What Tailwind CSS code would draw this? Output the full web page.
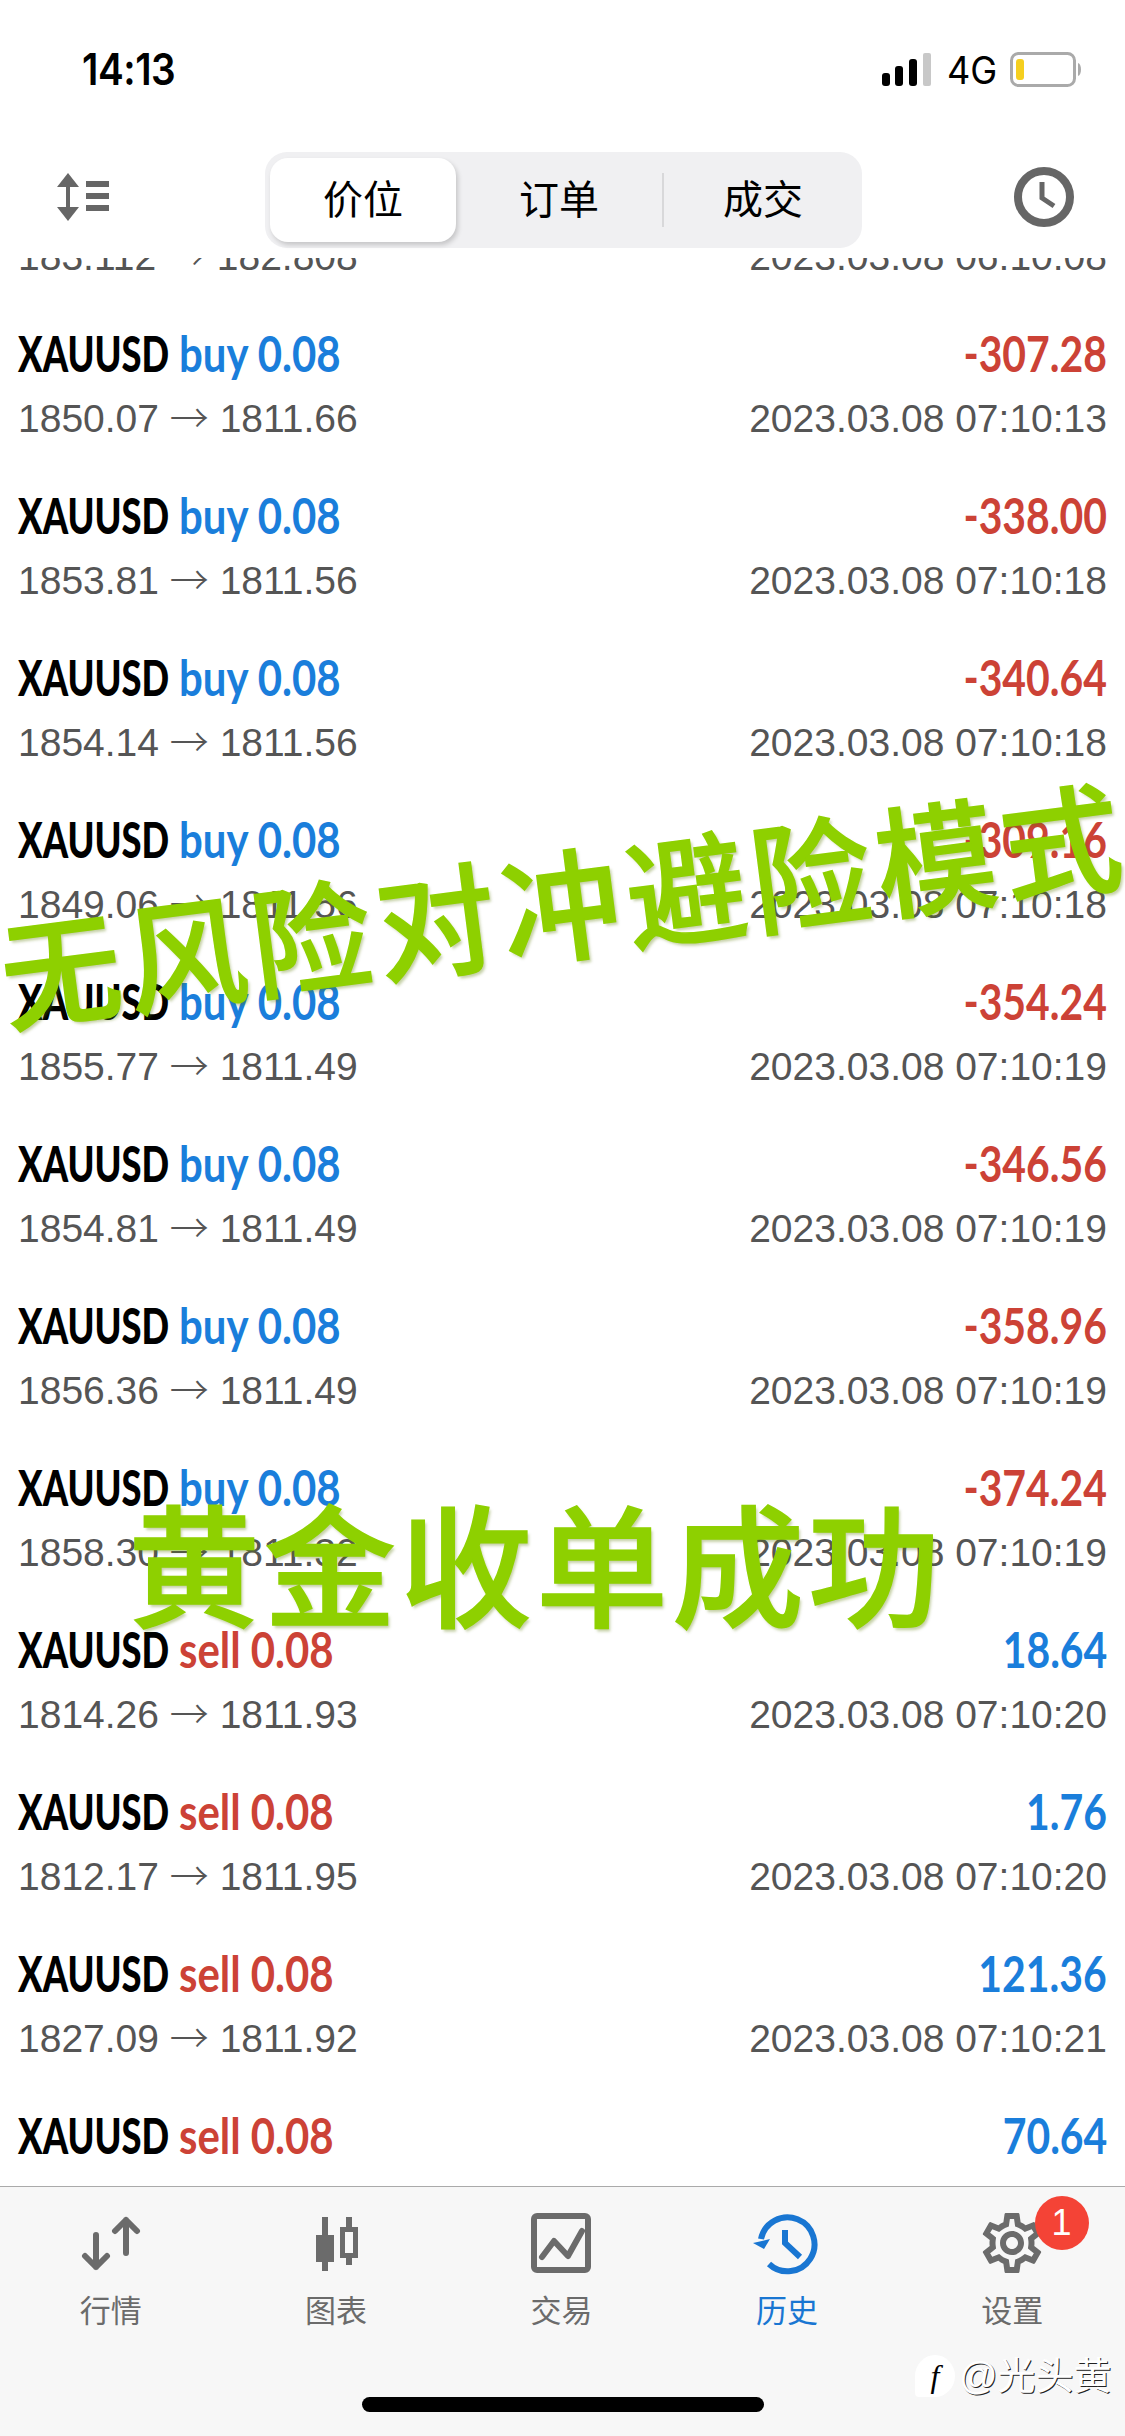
<!DOCTYPE html>
<html lang="zh">

<head>
    <meta charset="utf-8">
    <title>History</title>
    <script src="https://cdn.jsdelivr.net/npm/@tailwindcss/browser@4"></script>
</head>

<body class="bg-white font-['Liberation_Sans','Noto_Sans_CJK_SC',sans-serif]">
    <div class="relative w-[1125px] h-[2436px] overflow-hidden flex flex-col bg-white">

        <!-- Status bar -->
        <div class="h-[138px] shrink-0 flex justify-between pl-[82px] pr-[41px] pt-[45px] z-10 bg-white">
            <div class="text-[44px] leading-[48px] font-semibold text-black tracking-[-0.5px] font-['Inter',sans-serif] scale-x-[.88] origin-left">14:13</div>
            <div class="flex items-start gap-[15px] pt-[7px]">
                <svg class="w-[50px] h-[33px] mt-[1px]" viewBox="0 0 50 33">
                    <rect x="0" y="20" width="8" height="13" rx="3" fill="#000" />
                    <rect x="13" y="13" width="8" height="20" rx="3" fill="#000" />
                    <rect x="27" y="6" width="8" height="27" rx="3" fill="#000" />
                    <rect x="41" y="0" width="8" height="33" rx="2" fill="#c8c8c8" />
                </svg>
                <div class="text-[38px] leading-[36px] text-black font-['Inter',sans-serif] w-[48px] scale-x-[.95] origin-left">4G</div>
                <svg class="w-[74px] h-[35px]" viewBox="0 0 74 35">
                    <rect x="1.5" y="1.5" width="63" height="32" rx="7" fill="#fff" stroke="#aaa" stroke-width="3" />
                    <rect x="6" y="7" width="8" height="21" rx="3" fill="#f5cf1f" />
                    <path d="M68 11 C72 12 72 23 68 24 Z" fill="#aaa" />
                </svg>
            </div>
        </div>

        <!-- Header -->
        <div class="h-[120px] shrink-0 flex items-start relative z-10 bg-white">
            <svg class="absolute left-[55px] top-[34px] w-[56px] h-[50px]" viewBox="0 0 56 50" fill="#666">
                <rect x="11" y="6" width="4" height="38" />
                <path d="M13 1 L24 15 H2 Z" />
                <path d="M13 49 L24 35 H2 Z" />
                <rect x="31" y="9" width="23" height="6" />
                <rect x="31" y="21" width="23" height="6" />
                <rect x="31" y="33" width="23" height="6" />
            </svg>

            <div class="absolute left-[265px] top-[14px] w-[597px] h-[96px] rounded-[22px] bg-[#f0f0f2] flex items-center text-[40px] text-black">
                <div class="ml-[5px] w-[186px] h-[84px] rounded-[18px] bg-white shadow-[2px_3px_5px_rgba(0,0,0,0.18)] flex items-center justify-center">价位</div>
                <div class="w-[206px] text-center">订单</div>
                <div class="w-[2px] h-[54px] bg-[#d8d8da]"></div>
                <div class="flex-1 text-center">成交</div>
            </div>

            <svg class="absolute left-[1012px] top-[27px] w-[64px] h-[64px]" viewBox="0 0 64 64" fill="none" stroke="#666">
                <circle cx="32" cy="32" r="26" stroke-width="8" />
                <path d="M30 17 V33 L42 41" stroke-width="5" />
            </svg>
        </div>

        <!-- Deals list, scrolled so the first row is cut off -->
        <div class="flex-1 overflow-hidden">
            <div id="deals" class="-mt-[120px]"></div>
        </div>

        <!-- Tab bar -->
        <div class="h-[250px] shrink-0 relative bg-[#f7f7f7] border-t border-[#aaa] z-10">
            <div class="grid grid-cols-5 -ml-[2px] pt-[26px] text-[31px] leading-[36px] text-[#6b6b6b]">
                <div class="flex flex-col items-center gap-[21px]">
                    <svg class="w-[60px] h-[60px]" viewBox="0 0 60 60" fill="none" stroke="#6b6b6b" stroke-width="6" stroke-linecap="round" stroke-linejoin="round">
                        <path d="M15 22 V54 M4 43 L15 54 L26 43" />
                        <path d="M45 40 V7 M34 18 L45 7 L56 18" />
                    </svg>
                    <span>行情</span>
                </div>
                <div class="flex flex-col items-center gap-[21px]">
                    <svg class="w-[60px] h-[60px]" viewBox="0 0 60 60" fill="#6b6b6b">
                        <rect x="16" y="4" width="6" height="54" />
                        <rect x="10" y="22" width="18" height="27" />
                        <rect x="40" y="4" width="6" height="48" />
                        <rect x="36.5" y="16.5" width="13" height="26" fill="#f7f7f7" stroke="#6b6b6b" stroke-width="5" />
                    </svg>
                    <span>图表</span>
                </div>
                <div class="flex flex-col items-center gap-[21px]">
                    <svg class="w-[60px] h-[60px]" viewBox="0 0 60 60" fill="none" stroke="#6b6b6b" stroke-linecap="round" stroke-linejoin="round">
                        <rect x="3" y="3" width="54" height="54" rx="3" stroke-width="6" />
                        <path d="M11 44 L23 28 L37 43 L51 18" stroke-width="6" />
                    </svg>
                    <span>交易</span>
                </div>
                <div class="flex flex-col items-center gap-[21px] text-[#1976d2]">
                    <svg class="w-[60px] h-[60px] overflow-visible" viewBox="0 0 60 60" fill="none" stroke="#1976d2" stroke-width="6">
                        <path d="M12 51 A27 27 0 1 0 4 26" />
                        <path d="M-4 30 L13 26 L7 36 Z" fill="#1976d2" stroke="none" />
                        <path d="M28 17 V30 L43 44" />
                    </svg>
                    <span>历史</span>
                </div>
                <div class="relative flex flex-col items-center gap-[21px]">
                    <svg class="w-[60px] h-[60px] overflow-visible" viewBox="2 2 20 20" fill="#6b6b6b">
                        <path d="M19.43 12.98c.04-.32.07-.64.07-.98 0-.34-.03-.66-.07-.98l2.11-1.65c.19-.15.24-.42.12-.64l-2-3.46c-.09-.16-.26-.25-.44-.25-.06 0-.12.01-.17.03l-2.49 1c-.52-.4-1.08-.73-1.69-.98l-.38-2.65C14.46 2.18 14.25 2 14 2h-4c-.25 0-.46.18-.49.42l-.38 2.65c-.61.25-1.17.59-1.69.98l-2.49-1c-.06-.02-.12-.03-.18-.03-.17 0-.34.09-.43.25l-2 3.46c-.13.22-.07.49.12.64l2.11 1.65c-.04.32-.07.65-.07.98 0 .33.03.66.07.98l-2.11 1.65c-.19.15-.24.42-.12.64l2 3.46c.09.16.26.25.44.25.06 0 .12-.01.17-.03l2.49-1c.52.4 1.08.73 1.69.98l.38 2.65c.03.24.24.42.49.42h4c.25 0 .46-.18.49-.42l.38-2.65c.61-.25 1.17-.59 1.69-.98l2.49 1c.06.02.12.03.18.03.17 0 .34-.09.43-.25l2-3.46c.12-.22.07-.49-.12-.64l-2.11-1.65zm-1.98-1.71c.04.31.05.52.05.73 0 .21-.02.43-.05.73l-.14 1.13.89.7 1.08.84-.7 1.21-1.27-.51-1.04-.42-.9.68c-.43.32-.84.56-1.25.73l-1.06.43-.16 1.13-.2 1.35h-1.4l-.19-1.35-.16-1.13-1.06-.43c-.43-.18-.83-.41-1.23-.71l-.91-.7-1.06.43-1.27.51-.7-1.21 1.08-.84.89-.7-.14-1.13c-.03-.31-.05-.54-.05-.74s.02-.43.05-.73l.14-1.13-.89-.7-1.08-.84.7-1.21 1.27.51 1.04.42.9-.68c.43-.32.84-.56 1.25-.73l1.06-.43.16-1.13.2-1.35h1.39l.19 1.35.16 1.13 1.06.43c.43.18.83.41 1.23.71l.91.7 1.06-.43 1.27-.51.7 1.21-1.07.85-.89.7.14 1.13zM12 8c-2.21 0-4 1.79-4 4s1.79 4 4 4 4-1.79 4-4-1.79-4-4-4zm0 6c-1.1 0-2-.9-2-2s.9-2 2-2 2 .9 2 2-.9 2-2 2z" />
                    </svg>
                    <span>设置</span>
                    <div class="absolute left-[135px] top-[-17px] w-[54px] h-[54px] rounded-full bg-[#f44336] text-white text-[36px] leading-[54px] text-center">1</div>
                </div>
            </div>

            <!-- Home indicator -->
            <div class="absolute left-[362px] top-[210px] w-[402px] h-[15px] rounded-full bg-black"></div>

            <!-- Platform watermark -->
            <div class="absolute left-[915px] top-[168px] flex items-center gap-[4px]">
                <div class="w-[40px] h-[42px] rounded-[50%_50%_50%_10%] bg-white text-black text-[32px] italic leading-[42px] text-center font-['Liberation_Serif',serif]">f</div>
                <div class="text-[38px] leading-[40px] text-white [text-shadow:1px_1px_0_#222]">@光头黄</div>
            </div>
        </div>

        <!-- Green captions stuck over the screenshot -->
        <div class="absolute left-[563px] top-[900px] -translate-x-1/2 -translate-y-1/2 -rotate-[7.3deg] whitespace-nowrap text-[120px] leading-[130px] tracking-[6px] font-medium [-webkit-text-stroke:1.5px_#8ed000] text-[#8ed000] font-['Noto_Sans_CJK_SC',sans-serif] z-20 [text-shadow:2px_3px_3px_rgba(90,120,0,0.35)]">无风险对冲避险模式</div>
        <div class="absolute left-[128px] top-[1485px] whitespace-nowrap text-[132px] leading-[150px] tracking-[4px] font-medium [-webkit-text-stroke:1.5px_#8ed000] text-[#8ed000] font-['Noto_Sans_CJK_SC',sans-serif] z-20 [text-shadow:2px_3px_3px_rgba(90,120,0,0.35)]">黄金收单成功</div>
    </div>

    <script>
        // side, open -> close, time, profit
        const deals = [
            ["buy", "183.112", "182.808", "06:10:08", "-307.28"],
            ["buy", "1850.07", "1811.66", "07:10:13", "-307.28"],
            ["buy", "1853.81", "1811.56", "07:10:18", "-338.00"],
            ["buy", "1854.14", "1811.56", "07:10:18", "-340.64"],
            ["buy", "1849.06", "1811.56", "07:10:18", "-309.16"],
            ["buy", "1855.77", "1811.49", "07:10:19", "-354.24"],
            ["buy", "1854.81", "1811.49", "07:10:19", "-346.56"],
            ["buy", "1856.36", "1811.49", "07:10:19", "-358.96"],
            ["buy", "1858.30", "1811.32", "07:10:19", "-374.24"],
            ["sell", "1814.26", "1811.93", "07:10:20", "18.64"],
            ["sell", "1812.17", "1811.95", "07:10:20", "1.76"],
            ["sell", "1827.09", "1811.92", "07:10:21", "121.36"],
            ["sell", "1833.46", "1811.92", "07:10:21", "70.64"],
        ];

        const BLUE = "text-[#1a7edb]";
        const RED = "text-[#cc4236]";

        document.getElementById("deals").innerHTML = deals.map(([side, open, close, time, profit]) => `
            <div class="h-[162px] pt-[24px] px-[18px]">
                <div class="flex justify-between h-[58px] text-[49px] leading-[58px] font-['Lato',sans-serif] font-bold whitespace-nowrap">
                    <div class="flex">
                        <div class="w-[161px] shrink-0"><div class="w-max origin-left scale-x-[.74] font-black text-black">XAUUSD</div></div>
                        <div class="w-max origin-left scale-x-[.855] ${side == "buy" ? BLUE : RED}">${side} 0.08</div>
                    </div>
                    <div class="origin-right scale-x-[.835] ${profit[0] == "-" ? RED : BLUE}">${profit}</div>
                </div>
                <div class="flex justify-between mt-[12px] text-[39px] leading-[50px] text-[#555]">
                    <div>${open} <span class="font-['Noto_Sans_CJK_SC',sans-serif] font-light leading-[0]">→</span> ${close}</div>
                    <div>2023.03.08 ${time}</div>
                </div>
            </div>`).join("");
    </script>
</body>

</html>
